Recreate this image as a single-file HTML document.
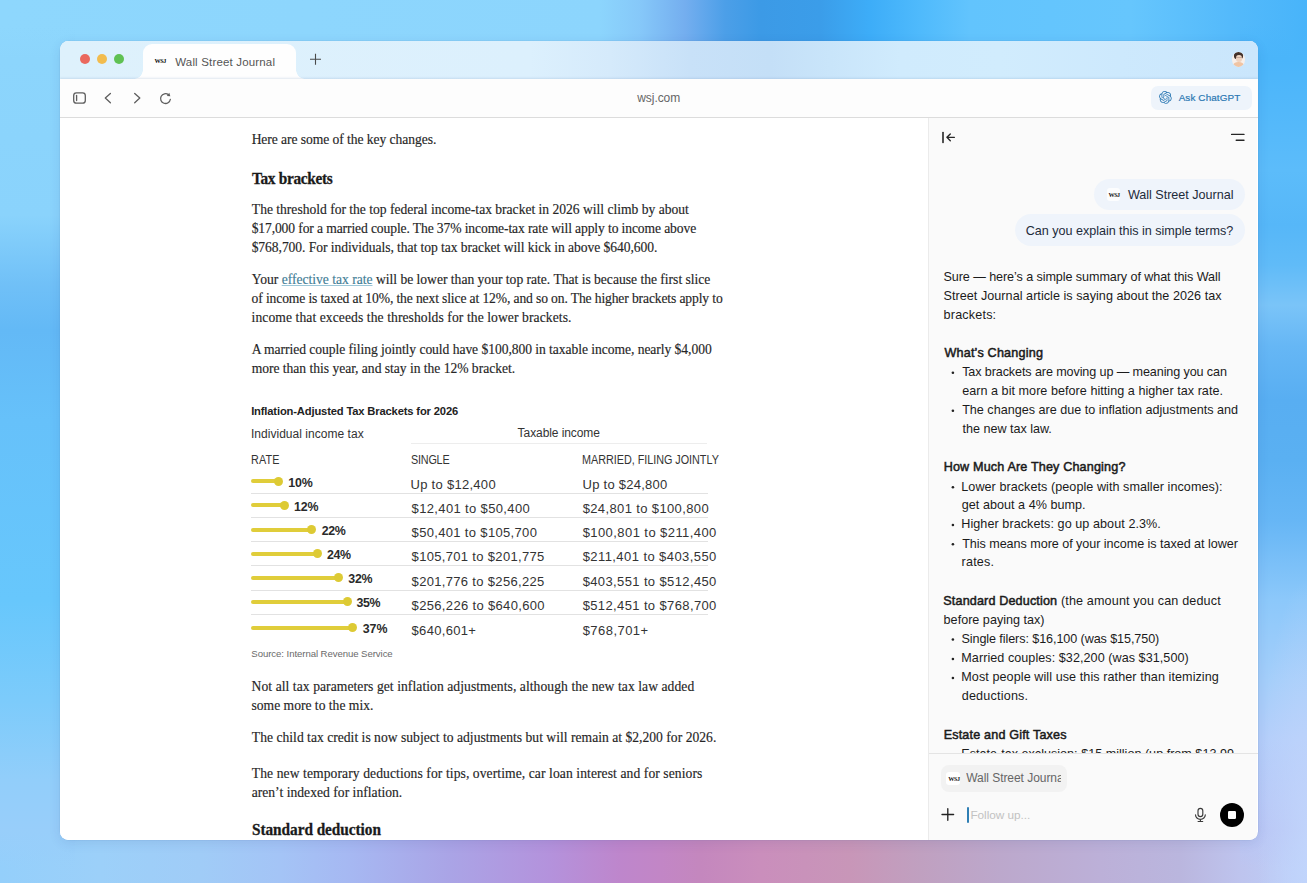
<!DOCTYPE html>
<html lang="en">
<head>
<meta charset="utf-8">
<title>Wall Street Journal</title>
<style>
*{box-sizing:border-box;margin:0;padding:0}
html,body{width:1307px;height:883px;overflow:hidden}
body{position:relative;font-family:"Liberation Sans",sans-serif;
 background:
  radial-gradient(ellipse 50px 260px at 1307px 840px, rgba(194,214,252,.85), rgba(194,214,252,0) 100%),
  linear-gradient(180deg, rgba(140,213,252,0) 25px, #8cd5fc 60px, #8ad3fc 215px, #70c0f7 285px, #63b9f6 330px, #66c1fa 420px, #67c7fc 600px, #7ccbfb 700px, #92cefa 780px, #98cefa 830px, rgba(152,206,250,0) 868px) 0 0 / 75px 883px no-repeat,
  linear-gradient(180deg, rgba(72,180,250,0) 25px, #4ab5fa 60px, #52b8fa 110px, #5cbcfa 170px, #56b7f8 225px, #60bbf8 265px, #7ac4f8 305px, #66b7f5 345px, #58aef2 400px, #5ab0f2 460px, #66b6f5 520px, #8cc8fa 600px, #a4cefa 680px, #b4cefa 740px, #b8c9f7 800px, #b9c6f5 830px, rgba(185,198,245,0) 868px) 1240px 0 / 67px 883px no-repeat,
  linear-gradient(90deg, #8ed7fd 0px, #8cd5fd 600px, #86c8f9 640px, #74aeef 685px, #4c9fe8 725px, #3c9ae6 760px, #3b9de9 820px, #3dadf8 870px, #4fbafc 920px, #62c4fd 970px, #66c6fd 1130px, #54bafb 1230px, #48b4fa 1307px) 0 0 / 1307px 70px no-repeat,
  linear-gradient(90deg, #94cffb 0px, #9cd0f9 100px, #a0ccf7 200px, #a4c4f6 280px, #a6b8f2 350px, #aaa4e6 450px, #b492dc 550px, #be86cc 620px, #c286c6 660px, #c487be 700px, #ca8ebc 760px, #c896b8 850px, #c0a0c0 920px, #bca8cc 1000px, #bcb0d8 1100px, #bab6de 1180px, #bec4ee 1240px, #bcd0fa 1307px) 0 810px / 1307px 73px no-repeat,
  #8cc8f8;
}
#win{position:absolute;left:60px;top:41px;width:1197.5px;height:798.5px;border-radius:8.5px;overflow:hidden;background:#fff;
 box-shadow:0 0 0 .5px rgba(90,130,180,.15), 0 3px 12px rgba(30,50,120,.10)}
#tabbar{position:absolute;left:0;top:0;width:100%;height:37.5px;background:linear-gradient(90deg,#def1fc 0px,#dcf0fd 470px,#d5eafb 550px,#c8e1f8 630px,#c4dff7 710px,#c9e5fa 770px,#d0ebfd 840px,#d1ecfd 940px,#cde9fd 1060px,#cae6fc 1197px)}
#tab{position:absolute;left:83.4px;top:2.5px;width:152.6px;height:36.5px;background:#fefefe;border-radius:9px 9px 0 0}
#tab:before,#tab:after{content:"";position:absolute;bottom:1.5px;width:9px;height:9px;background:radial-gradient(circle at 0 0, rgba(254,254,254,0) 8.5px, #fefefe 9px)}
#tab:before{left:-9px}
#tab:after{right:-9px;transform:scaleX(-1)}
#toolbar{position:absolute;left:0;top:37.5px;width:100%;height:39px;background:#fdfdfd;border-bottom:1px solid #dcdcdc;box-shadow:0 -1px 2px rgba(90,130,170,.18)}
.tl{position:absolute;top:13.1px;width:10.4px;height:10.4px;border-radius:50%}
#page{position:absolute;left:0;top:76.5px;width:868px;height:722px;background:#fff}
#side{position:absolute;left:867.8px;top:76.5px;width:329px;height:722px;background:#fafafa;border-left:1px solid #ebebeb}
.t{position:absolute;white-space:nowrap;line-height:20px;height:20px}
.lk{color:#3f7d96;text-decoration:underline;text-decoration-color:#9cc7d8;text-decoration-thickness:1px;text-underline-offset:1.4px}
.bar{position:absolute;height:4px;background:#e0cd3a;border-radius:2px}
.dot{position:absolute;width:9.2px;height:9.2px;border-radius:50%;background:#ddca34}
.sep{position:absolute;left:251px;width:457px;height:1px;background:#e2e2e2}
.bl{position:absolute;left:951.7px;width:2.4px;height:2.4px;border-radius:50%;background:#222}
svg{position:absolute;overflow:visible}
.bub{position:absolute;background:#eff4fb;border-radius:16px}
</style>
</head>
<body>
<div id="win">
  <div id="tabbar">
    <div class="tl" style="left:19.5px;background:#ea685e"></div>
    <div class="tl" style="left:36.6px;background:#f2bc4e"></div>
    <div class="tl" style="left:54.1px;background:#5fc153"></div>
    <div id="tab"></div>
  </div>
  <div id="toolbar"></div>
  <div id="page"></div>
  <div id="side"></div>
</div>

<!-- absolute overlay in page coordinates -->
<div id="ov" style="position:absolute;left:0;top:0;width:1307px;height:883px">
<!-- tab favicon -->
<div style="position:absolute;left:154.6px;top:57.4px;font:700 6.2px/8px 'Liberation Serif',serif;color:#111;letter-spacing:-.45px">WSJ</div>
<!-- new tab plus -->

<!-- avatar -->
<div style="position:absolute;left:1231.8px;top:51.6px;width:13.6px;height:15.4px;border-radius:50%;overflow:hidden;background:#f8efe9">
  <div style="position:absolute;left:2.6px;top:.6px;width:8.4px;height:6.4px;border-radius:50% 50% 40% 40%;background:#43312a"></div>
  <div style="position:absolute;left:3.8px;top:3px;width:6px;height:7.4px;border-radius:45%;background:#efd3c0"></div>
  <div style="position:absolute;left:3.8px;top:5.7px;width:6px;height:.7px;background:#8a6a5c;opacity:.35"></div>
  <div style="position:absolute;left:1.4px;top:10.2px;width:10.8px;height:7px;border-radius:50% 50% 0 0;background:#f0c4a3"></div>
</div>
<!-- icons -->
<svg style="left:0;top:0" width="1307" height="883" viewBox="0 0 1307 883">
<g fill="none" stroke="#5e5e5e" stroke-width="1.3" stroke-linecap="round" stroke-linejoin="round">
<rect x="73.7" y="92.8" width="11.6" height="10.3" rx="2.7"/>
<path d="M76.6 95.4v5.2"/>
<path d="M110.4 93.5L105.3 98.1l5.1 4.7"/>
<path d="M134.7 93.5l5.1 4.6-5.1 4.7"/>
<path d="M170.35 99.28A4.9 4.9 0 1 1 168.52 94.74"/>
</g>
<path d="M170.33 96.15L169.28 92.79L166.81 95.95z" fill="#5e5e5e"/>
<path d="M315.5 53.8v11M310 59.3h11" stroke="#4a4a4a" stroke-width="1.1" fill="none"/>
<g fill="none" stroke="#262626" stroke-width="1.35" stroke-linecap="round" stroke-linejoin="round">
<path d="M943 132.6v9.8" stroke-width="1.6"/>
<path d="M954.4 137.3H947M950.3 133.9L946.9 137.3l3.4 3.4"/>
<path d="M1231.6 134.4h12.4M1236.2 140.2h7.8"/>
<path d="M947.8 808.7v11.6M942 814.5h11.6" stroke="#222"/>
</g>
<g fill="none" stroke="#3a3a3a" stroke-width="1.15" stroke-linecap="round">
<rect x="1198" y="808.4" width="4.8" height="8.2" rx="2.4"/>
<path d="M1195.5 814.8a4.9 4.5 0 0 0 9.8 0M1200.4 819.3v2.2M1198.1 821.5h4.6"/>
</g>
</svg>





<!-- Ask ChatGPT button -->
<div style="position:absolute;left:1150.5px;top:85.5px;width:101px;height:24.5px;border-radius:7px;background:#eef4fb"></div>
<svg style="left:1158.6px;top:91.2px" width="12.8" height="12.8" viewBox="0 0 24 24"><path fill="#2b78b3" d="M22.2819 9.8211a5.9847 5.9847 0 0 0-.5157-4.9108 6.0462 6.0462 0 0 0-6.5098-2.9A6.0651 6.0651 0 0 0 4.9807 4.1818a5.9847 5.9847 0 0 0-3.9977 2.9 6.0462 6.0462 0 0 0 .7427 7.0966 5.98 5.98 0 0 0 .511 4.9107 6.051 6.051 0 0 0 6.5146 2.9001A5.9847 5.9847 0 0 0 13.2599 24a6.0557 6.0557 0 0 0 5.7718-4.2058 5.9894 5.9894 0 0 0 3.9977-2.9001 6.0557 6.0557 0 0 0-.7475-7.0729zm-9.022 12.6081a4.4755 4.4755 0 0 1-2.8764-1.0408l.1419-.0804 4.7783-2.7582a.7948.7948 0 0 0 .3927-.6813v-6.7369l2.02 1.1686a.071.071 0 0 1 .038.052v5.5826a4.504 4.504 0 0 1-4.4945 4.4944zm-9.6607-4.1254a4.4708 4.4708 0 0 1-.5346-3.0137l.142.0852 4.783 2.7582a.7712.7712 0 0 0 .7806 0l5.8428-3.3685v2.3324a.0804.0804 0 0 1-.0332.0615L9.74 19.9502a4.4992 4.4992 0 0 1-6.1408-1.6464zM2.3408 7.8956a4.485 4.485 0 0 1 2.3655-1.9728V11.6a.7664.7664 0 0 0 .3879.6765l5.8144 3.3543-2.0201 1.1685a.0757.0757 0 0 1-.071 0l-4.8303-2.7865A4.504 4.504 0 0 1 2.3408 7.872zm16.5963 3.8558L13.1038 8.364 15.1192 7.2a.0757.0757 0 0 1 .071 0l4.8303 2.7913a4.4944 4.4944 0 0 1-.6765 8.1042v-5.6772a.79.79 0 0 0-.407-.667zm2.0107-3.0231l-.142-.0852-4.7735-2.7818a.7759.7759 0 0 0-.7854 0L9.409 9.2297V6.8974a.0662.0662 0 0 1 .0284-.0615l4.8303-2.7866a4.4992 4.4992 0 0 1 6.6802 4.66zM8.3065 12.863l-2.02-1.1638a.0804.0804 0 0 1-.038-.0567V6.0742a4.4992 4.4992 0 0 1 7.3757-3.4537l-.142.0805L8.704 5.459a.7948.7948 0 0 0-.3927.6813zm1.0976-2.3654l2.602-1.4998 2.6069 1.4998v2.9994l-2.5974 1.4997-2.6067-1.4997Z"/></svg>
<!-- sidebar header icons -->


<!-- bubbles -->
<div class="bub" style="left:1094px;top:178.5px;width:151px;height:31.5px"></div>
<div class="bub" style="left:1014.7px;top:213.7px;width:230.3px;height:32.6px"></div>
<div style="position:absolute;left:1107px;top:187.6px;width:13.4px;height:13.4px;border-radius:3px;background:#fcfdfe"></div>
<div style="position:absolute;left:1108.4px;top:190.6px;font:700 6.2px/8px 'Liberation Serif',serif;color:#222;letter-spacing:-.45px">WSJ</div>
<!-- composer -->
<div style="position:absolute;left:929px;top:753px;width:328.5px;height:1px;background:#e4e4e4"></div>
<div style="position:absolute;left:941px;top:764.5px;width:126.4px;height:27.8px;border-radius:8px;background:#f2f2f2"></div>
<div style="position:absolute;left:946.1px;top:771.5px;width:14px;height:13.4px;border-radius:3px;background:#fff"></div>
<div style="position:absolute;left:948.3px;top:774.6px;font:700 6.2px/8px 'Liberation Serif',serif;color:#222;letter-spacing:-.45px">WSJ</div>

<div style="position:absolute;left:967px;top:806.8px;width:1.8px;height:15.8px;background:#2f7fb4;border-radius:1px"></div>

<div style="position:absolute;left:1219.7px;top:802.7px;width:24px;height:24px;border-radius:50%;background:#000"></div>
<div style="position:absolute;left:1227.7px;top:810.7px;width:8.2px;height:8.2px;border-radius:1.2px;background:#fff"></div>

<div class="bar" style="left:251px;top:479.3px;width:27.8px"></div>
<div class="dot" style="left:274.2px;top:476.7px"></div>
<div class="bar" style="left:251px;top:503.4px;width:33.2px"></div>
<div class="dot" style="left:279.6px;top:500.8px"></div>
<div class="bar" style="left:251px;top:527.5px;width:60.6px"></div>
<div class="dot" style="left:307.0px;top:524.9px"></div>
<div class="bar" style="left:251px;top:551.6px;width:66.2px"></div>
<div class="dot" style="left:312.6px;top:549.0px"></div>
<div class="bar" style="left:251px;top:575.7px;width:87.9px"></div>
<div class="dot" style="left:334.3px;top:573.1px"></div>
<div class="bar" style="left:251px;top:599.8px;width:96.4px"></div>
<div class="dot" style="left:342.8px;top:597.2px"></div>
<div class="bar" style="left:251px;top:625.6px;width:101.8px"></div>
<div class="dot" style="left:348.2px;top:623.0px"></div>
<div class="sep" style="top:493.0px"></div>
<div class="sep" style="top:517.1px"></div>
<div class="sep" style="top:541.2px"></div>
<div class="sep" style="top:565.4px"></div>
<div class="sep" style="top:589.6px"></div>
<div class="sep" style="top:613.9px"></div>
<div class="sep" style="left:411px;width:296px;top:443.3px;background:#ededed"></div>
<svg style="left:0;top:0" width="1307" height="883" viewBox="0 0 1307 883"><g fill="#222"><circle cx="952.9" cy="372.8" r="1.3"/><circle cx="952.9" cy="410.8" r="1.3"/><circle cx="952.9" cy="487.3" r="1.3"/><circle cx="952.9" cy="525.0" r="1.3"/><circle cx="952.9" cy="544.3" r="1.3"/><circle cx="952.9" cy="639.5" r="1.3"/><circle cx="952.9" cy="659.0" r="1.3"/><circle cx="952.9" cy="678.0" r="1.3"/></g></svg>
<div class="t" id="a1" style='left:251.63px;top:129.91px;font-family:"Liberation Serif", serif;font-size:13.6px;font-weight:400;color:#262626;letter-spacing:-0.067px;-webkit-text-stroke:.15px;'>Here are some of the key changes.</div>
<div class="t" id="h1" style='left:252.02px;top:168.71px;font-family:"Liberation Serif", serif;font-size:17px;font-weight:700;color:#1a1a1a;letter-spacing:-0.324px;-webkit-text-stroke:.3px;transform:scaleX(0.9);transform-origin:0 0;'>Tax brackets</div>
<div class="t" id="a2" style='left:251.86px;top:199.50px;font-family:"Liberation Serif", serif;font-size:13.6px;font-weight:400;color:#262626;letter-spacing:-0.017px;-webkit-text-stroke:.15px;'>The threshold for the top federal income-tax bracket in 2026 will climb by about</div>
<div class="t" id="a3" style='left:251.64px;top:218.81px;font-family:"Liberation Serif", serif;font-size:13.6px;font-weight:400;color:#262626;letter-spacing:-0.118px;-webkit-text-stroke:.15px;'>$17,000 for a married couple. The 37% income-tax rate will apply to income above</div>
<div class="t" id="a4" style='left:251.64px;top:238.10px;font-family:"Liberation Serif", serif;font-size:13.6px;font-weight:400;color:#262626;letter-spacing:-0.067px;-webkit-text-stroke:.15px;'>$768,700. For individuals, that top tax bracket will kick in above $640,600.</div>
<div class="t" id="a5" style='left:251.76px;top:269.50px;font-family:"Liberation Serif", serif;font-size:13.6px;font-weight:400;color:#262626;letter-spacing:-0.013px;-webkit-text-stroke:.15px;'>Your <span class="lk">effective tax rate</span> will be lower than your top rate. That is because the first slice</div>
<div class="t" id="a6" style='left:251.59px;top:288.81px;font-family:"Liberation Serif", serif;font-size:13.6px;font-weight:400;color:#262626;letter-spacing:-0.130px;-webkit-text-stroke:.15px;'>of income is taxed at 10%, the next slice at 12%, and so on. The higher brackets apply to</div>
<div class="t" id="a7" style='left:251.60px;top:308.10px;font-family:"Liberation Serif", serif;font-size:13.6px;font-weight:400;color:#262626;letter-spacing:0.081px;-webkit-text-stroke:.15px;'>income that exceeds the thresholds for the lower brackets.</div>
<div class="t" id="a8" style='left:251.72px;top:339.50px;font-family:"Liberation Serif", serif;font-size:13.6px;font-weight:400;color:#262626;letter-spacing:-0.057px;-webkit-text-stroke:.15px;'>A married couple filing jointly could have $100,800 in taxable income, nearly $4,000</div>
<div class="t" id="a9" style='left:251.68px;top:358.81px;font-family:"Liberation Serif", serif;font-size:13.6px;font-weight:400;color:#262626;letter-spacing:-0.030px;-webkit-text-stroke:.15px;'>more than this year, and stay in the 12% bracket.</div>
<div class="t" id="c0" style='left:251.13px;top:401.31px;font-family:"Liberation Sans", sans-serif;font-size:11.2px;font-weight:700;color:#222;letter-spacing:-0.153px;'>Inflation-Adjusted Tax Brackets for 2026</div>
<div class="t" id="c1" style='left:250.92px;top:423.81px;font-family:"Liberation Sans", sans-serif;font-size:12px;font-weight:400;color:#333;letter-spacing:0.036px;'>Individual income tax</div>
<div class="t" id="c2" style='left:517.61px;top:423.41px;font-family:"Liberation Sans", sans-serif;font-size:12px;font-weight:400;color:#333;letter-spacing:-0.079px;'>Taxable income</div>
<div class="t" id="c3" style='left:251.10px;top:450.00px;font-family:"Liberation Sans", sans-serif;font-size:12px;font-weight:400;color:#333;letter-spacing:0.128px;transform:scaleX(0.9);transform-origin:0 0;'>RATE</div>
<div class="t" id="c4" style='left:410.90px;top:450.00px;font-family:"Liberation Sans", sans-serif;font-size:12px;font-weight:400;color:#333;letter-spacing:-0.221px;transform:scaleX(0.9);transform-origin:0 0;'>SINGLE</div>
<div class="t" id="c5" style='left:582.00px;top:450.00px;font-family:"Liberation Sans", sans-serif;font-size:12px;font-weight:400;color:#333;letter-spacing:-0.019px;transform:scaleX(0.9);transform-origin:0 0;'>MARRIED, FILING JOINTLY</div>
<div class="t" id="p0" style='left:288.19px;top:472.50px;font-family:"Liberation Sans", sans-serif;font-size:12.4px;font-weight:700;color:#2a2a2a;letter-spacing:-0.065px;'>10%</div>
<div class="t" id="s0" style='left:410.54px;top:474.50px;font-family:"Liberation Sans", sans-serif;font-size:13px;font-weight:400;color:#333;letter-spacing:0.284px;'>Up to $12,400</div>
<div class="t" id="m0" style='left:582.50px;top:474.50px;font-family:"Liberation Sans", sans-serif;font-size:13px;font-weight:400;color:#333;letter-spacing:0.261px;'>Up to $24,800</div>
<div class="t" id="p1" style='left:293.94px;top:496.81px;font-family:"Liberation Sans", sans-serif;font-size:12.4px;font-weight:700;color:#2a2a2a;letter-spacing:-0.133px;'>12%</div>
<div class="t" id="s1" style='left:411.59px;top:498.81px;font-family:"Liberation Sans", sans-serif;font-size:13px;font-weight:400;color:#333;letter-spacing:0.358px;'>$12,401 to $50,400</div>
<div class="t" id="m1" style='left:582.65px;top:498.81px;font-family:"Liberation Sans", sans-serif;font-size:13px;font-weight:400;color:#333;letter-spacing:0.373px;'>$24,801 to $100,800</div>
<div class="t" id="p2" style='left:321.65px;top:520.91px;font-family:"Liberation Sans", sans-serif;font-size:12.4px;font-weight:700;color:#2a2a2a;letter-spacing:-0.286px;'>22%</div>
<div class="t" id="s2" style='left:411.59px;top:523.10px;font-family:"Liberation Sans", sans-serif;font-size:13px;font-weight:400;color:#333;letter-spacing:0.336px;'>$50,401 to $105,700</div>
<div class="t" id="m2" style='left:582.65px;top:523.10px;font-family:"Liberation Sans", sans-serif;font-size:13px;font-weight:400;color:#333;letter-spacing:0.430px;'>$100,801 to $211,400</div>
<div class="t" id="p3" style='left:327.03px;top:544.81px;font-family:"Liberation Sans", sans-serif;font-size:12.4px;font-weight:700;color:#2a2a2a;letter-spacing:-0.400px;'>24%</div>
<div class="t" id="s3" style='left:411.59px;top:547.41px;font-family:"Liberation Sans", sans-serif;font-size:13px;font-weight:400;color:#333;letter-spacing:0.328px;'>$105,701 to $201,775</div>
<div class="t" id="m3" style='left:582.65px;top:547.41px;font-family:"Liberation Sans", sans-serif;font-size:13px;font-weight:400;color:#333;letter-spacing:0.430px;'>$211,401 to $403,550</div>
<div class="t" id="p4" style='left:348.19px;top:569.10px;font-family:"Liberation Sans", sans-serif;font-size:12.4px;font-weight:700;color:#2a2a2a;letter-spacing:-0.190px;'>32%</div>
<div class="t" id="s4" style='left:411.59px;top:571.71px;font-family:"Liberation Sans", sans-serif;font-size:13px;font-weight:400;color:#333;letter-spacing:0.328px;'>$201,776 to $256,225</div>
<div class="t" id="m4" style='left:582.65px;top:571.71px;font-family:"Liberation Sans", sans-serif;font-size:13px;font-weight:400;color:#333;letter-spacing:0.378px;'>$403,551 to $512,450</div>
<div class="t" id="p5" style='left:356.41px;top:593.41px;font-family:"Liberation Sans", sans-serif;font-size:12.4px;font-weight:700;color:#2a2a2a;letter-spacing:-0.308px;'>35%</div>
<div class="t" id="s5" style='left:411.59px;top:596.21px;font-family:"Liberation Sans", sans-serif;font-size:13px;font-weight:400;color:#333;letter-spacing:0.342px;'>$256,226 to $640,600</div>
<div class="t" id="m5" style='left:582.65px;top:596.21px;font-family:"Liberation Sans", sans-serif;font-size:13px;font-weight:400;color:#333;letter-spacing:0.378px;'>$512,451 to $768,700</div>
<div class="t" id="p6" style='left:362.64px;top:619.31px;font-family:"Liberation Sans", sans-serif;font-size:12.4px;font-weight:700;color:#2a2a2a;letter-spacing:0.012px;'>37%</div>
<div class="t" id="s6" style='left:411.59px;top:620.50px;font-family:"Liberation Sans", sans-serif;font-size:13px;font-weight:400;color:#333;letter-spacing:0.308px;'>$640,601+</div>
<div class="t" id="m6" style='left:582.65px;top:620.50px;font-family:"Liberation Sans", sans-serif;font-size:13px;font-weight:400;color:#333;letter-spacing:0.457px;'>$768,701+</div>
<div class="t" id="c6" style='left:251.37px;top:644.31px;font-family:"Liberation Sans", sans-serif;font-size:9.6px;font-weight:400;color:#6a6a6a;letter-spacing:-0.068px;'>Source: Internal Revenue Service</div>
<div class="t" id="b1" style='left:251.59px;top:676.91px;font-family:"Liberation Serif", serif;font-size:13.6px;font-weight:400;color:#262626;letter-spacing:0.065px;-webkit-text-stroke:.15px;'>Not all tax parameters get inflation adjustments, although the new tax law added</div>
<div class="t" id="b2" style='left:251.51px;top:696.31px;font-family:"Liberation Serif", serif;font-size:13.6px;font-weight:400;color:#262626;letter-spacing:-0.005px;-webkit-text-stroke:.15px;'>some more to the mix.</div>
<div class="t" id="b3" style='left:251.86px;top:728.10px;font-family:"Liberation Serif", serif;font-size:13.6px;font-weight:400;color:#262626;letter-spacing:0.014px;-webkit-text-stroke:.15px;'>The child tax credit is now subject to adjustments but will remain at $2,200 for 2026.</div>
<div class="t" id="b4" style='left:251.86px;top:764.21px;font-family:"Liberation Serif", serif;font-size:13.6px;font-weight:400;color:#262626;letter-spacing:0.081px;-webkit-text-stroke:.15px;'>The new temporary deductions for tips, overtime, car loan interest and for seniors</div>
<div class="t" id="b5" style='left:251.65px;top:782.91px;font-family:"Liberation Serif", serif;font-size:13.6px;font-weight:400;color:#262626;letter-spacing:0.023px;-webkit-text-stroke:.15px;'>aren’t indexed for inflation.</div>
<div class="t" id="h2" style='left:251.62px;top:819.71px;font-family:"Liberation Serif", serif;font-size:17px;font-weight:700;color:#1a1a1a;letter-spacing:-0.050px;-webkit-text-stroke:.3px;transform:scaleX(0.9);transform-origin:0 0;'>Standard deduction</div>
<div class="t" id="tabt" style='left:175.24px;top:51.91px;font-family:"Liberation Sans", sans-serif;font-size:11.5px;font-weight:400;color:#555;letter-spacing:0.168px;'>Wall Street Journal</div>
<div class="t" id="url" style='left:637.25px;top:87.71px;font-family:"Liberation Sans", sans-serif;font-size:12px;font-weight:400;color:#666;letter-spacing:-0.063px;'>wsj.com</div>
<div class="t" id="ask" style='left:1178.66px;top:88.21px;font-family:"Liberation Sans", sans-serif;font-size:9.9px;font-weight:400;color:#2b78b3;letter-spacing:0.127px;-webkit-text-stroke:0.2px #2b78b3;'>Ask ChatGPT</div>
<div class="t" id="k1" style='left:1127.92px;top:184.60px;font-family:"Liberation Sans", sans-serif;font-size:12.6px;font-weight:400;color:#1d2b3a;letter-spacing:-0.022px;'>Wall Street Journal</div>
<div class="t" id="k2" style='left:1025.77px;top:220.50px;font-family:"Liberation Sans", sans-serif;font-size:12.6px;font-weight:400;color:#1d2b3a;letter-spacing:-0.031px;'>Can you explain this in simple terms?</div>
<div class="t" id="t1" style='left:943.50px;top:266.50px;font-family:"Liberation Sans", sans-serif;font-size:12.6px;font-weight:400;color:#1b1b1b;letter-spacing:-0.079px;'>Sure — here’s a simple summary of what this Wall</div>
<div class="t" id="t2" style='left:943.50px;top:285.91px;font-family:"Liberation Sans", sans-serif;font-size:12.6px;font-weight:400;color:#1b1b1b;letter-spacing:0.045px;'>Street Journal article is saying about the 2026 tax</div>
<div class="t" id="t3" style='left:943.62px;top:304.91px;font-family:"Liberation Sans", sans-serif;font-size:12.6px;font-weight:400;color:#1b1b1b;letter-spacing:0.175px;'>brackets:</div>
<div class="t" id="t4" style='left:944.42px;top:342.50px;font-family:"Liberation Sans", sans-serif;font-size:12.6px;font-weight:400;color:#1b1b1b;letter-spacing:0.203px;-webkit-text-stroke:.5px;'>What’s Changing</div>
<div class="t" id="t5" style='left:962.15px;top:362.00px;font-family:"Liberation Sans", sans-serif;font-size:12.6px;font-weight:400;color:#1b1b1b;letter-spacing:-0.109px;'>Tax brackets are moving up — meaning you can</div>
<div class="t" id="t6" style='left:962.15px;top:381.00px;font-family:"Liberation Sans", sans-serif;font-size:12.6px;font-weight:400;color:#1b1b1b;letter-spacing:0.038px;'>earn a bit more before hitting a higher tax rate.</div>
<div class="t" id="t7" style='left:962.15px;top:400.00px;font-family:"Liberation Sans", sans-serif;font-size:12.6px;font-weight:400;color:#1b1b1b;letter-spacing:-0.001px;'>The changes are due to inflation adjustments and</div>
<div class="t" id="t8" style='left:962.52px;top:418.81px;font-family:"Liberation Sans", sans-serif;font-size:12.6px;font-weight:400;color:#1b1b1b;letter-spacing:-0.021px;'>the new tax law.</div>
<div class="t" id="t9" style='left:943.67px;top:457.21px;font-family:"Liberation Sans", sans-serif;font-size:12.6px;font-weight:400;color:#1b1b1b;letter-spacing:0.160px;-webkit-text-stroke:.5px;'>How Much Are They Changing?</div>
<div class="t" id="t10" style='left:961.29px;top:476.50px;font-family:"Liberation Sans", sans-serif;font-size:12.6px;font-weight:400;color:#1b1b1b;letter-spacing:0.053px;'>Lower brackets (people with smaller incomes):</div>
<div class="t" id="t11" style='left:961.78px;top:495.41px;font-family:"Liberation Sans", sans-serif;font-size:12.6px;font-weight:400;color:#1b1b1b;letter-spacing:0.032px;'>get about a 4% bump.</div>
<div class="t" id="t12" style='left:961.29px;top:514.21px;font-family:"Liberation Sans", sans-serif;font-size:12.6px;font-weight:400;color:#1b1b1b;letter-spacing:0.065px;'>Higher brackets: go up about 2.3%.</div>
<div class="t" id="t13" style='left:962.15px;top:533.50px;font-family:"Liberation Sans", sans-serif;font-size:12.6px;font-weight:400;color:#1b1b1b;letter-spacing:-0.046px;'>This means more of your income is taxed at lower</div>
<div class="t" id="t14" style='left:961.52px;top:552.41px;font-family:"Liberation Sans", sans-serif;font-size:12.6px;font-weight:400;color:#1b1b1b;letter-spacing:0.218px;'>rates.</div>
<div class="t" id="t15" style='left:943.29px;top:591.41px;font-family:"Liberation Sans", sans-serif;font-size:12.6px;font-weight:400;color:#1b1b1b;letter-spacing:0.147px;'><span style="-webkit-text-stroke:.5px">Standard Deduction</span> (the amount you can deduct</div>
<div class="t" id="t16" style='left:943.62px;top:610.00px;font-family:"Liberation Sans", sans-serif;font-size:12.6px;font-weight:400;color:#1b1b1b;letter-spacing:0.008px;'>before paying tax)</div>
<div class="t" id="t17" style='left:961.51px;top:628.71px;font-family:"Liberation Sans", sans-serif;font-size:12.6px;font-weight:400;color:#1b1b1b;letter-spacing:-0.091px;'>Single filers: $16,100 (was $15,750)</div>
<div class="t" id="t18" style='left:961.29px;top:648.21px;font-family:"Liberation Sans", sans-serif;font-size:12.6px;font-weight:400;color:#1b1b1b;letter-spacing:0.054px;'>Married couples: $32,200 (was $31,500)</div>
<div class="t" id="t19" style='left:961.29px;top:667.21px;font-family:"Liberation Sans", sans-serif;font-size:12.6px;font-weight:400;color:#1b1b1b;letter-spacing:0.075px;'>Most people will use this rather than itemizing</div>
<div class="t" id="t20" style='left:961.73px;top:686.00px;font-family:"Liberation Sans", sans-serif;font-size:12.6px;font-weight:400;color:#1b1b1b;letter-spacing:0.198px;'>deductions.</div>
<div class="t" id="t21" style='left:943.67px;top:725.01px;font-family:"Liberation Sans", sans-serif;font-size:12.6px;font-weight:400;color:#1b1b1b;letter-spacing:0.168px;-webkit-text-stroke:.5px;'>Estate and Gift Taxes</div>
<div class="t" id="t22" style='left:961.29px;top:744.30px;font-family:"Liberation Sans", sans-serif;font-size:12.6px;font-weight:400;color:#1b1b1b;letter-spacing:0.007px;clip-path:inset(0 0 11.3px 0);'>Estate-tax exclusion: $15 million (up from $13.99</div>
<div class="t" id="chip" style='left:966.19px;top:767.81px;font-family:"Liberation Sans", sans-serif;font-size:12px;font-weight:400;color:#666;letter-spacing:-0.047px;width:95.0px;overflow:hidden;'>Wall Street Journal</div>
<div class="t" id="ph" style='left:970.42px;top:804.50px;font-family:"Liberation Sans", sans-serif;font-size:11.8px;font-weight:400;color:#c2c2c2;letter-spacing:-0.046px;'>Follow up...</div>
</div>
</body>
</html>
